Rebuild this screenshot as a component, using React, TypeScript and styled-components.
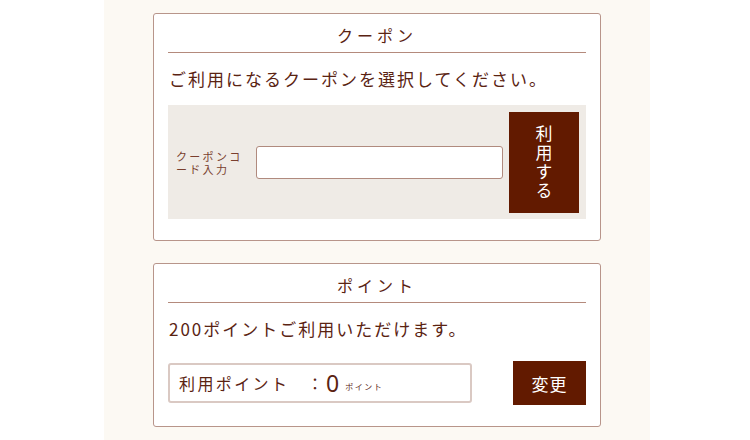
import styled, { createGlobalStyle } from 'styled-components';

const GlobalStyle = createGlobalStyle`
  html, body {
    margin: 0;
    padding: 0;
    background: #ffffff;
  }
  body {
    font-family: 'Noto Sans CJK JP', 'Noto Sans', sans-serif;
    color: #5a2312;
  }
`;

const Page = styled.div`
  width: 750px;
  height: 440px;
  overflow: hidden;
  background: #ffffff;
`;

const Panel = styled.div`
  margin-left: 104px;
  width: 546px;
  height: 440px;
  box-sizing: border-box;
  padding: 13px 49px 0;
  background: #fcf9f3;
  display: flex;
  flex-direction: column;
  gap: 22px;
`;

const Card = styled.section`
  width: 448px;
  box-sizing: border-box;
  background: #ffffff;
  border: 1px solid #b8958a;
  border-radius: 3px;
  padding: 0 14px 21px;
`;

const Title = styled.h2`
  margin: 0;
  height: 38px;
  line-height: 42px;
  text-align: center;
  font-size: 16px;
  font-weight: 400;
  letter-spacing: 4px;
  border-bottom: 1px solid #b48a7c;
`;

const Lead = styled.p<{ $after: number }>`
  margin: 13px 0 ${(p) => p.$after}px 1px;
  line-height: 26px;
  font-size: 17px;
  letter-spacing: 2px;
`;

const CodeBox = styled.div`
  height: 114px;
  box-sizing: border-box;
  background: #efebe6;
  padding: 7px 7px 6px 8px;
  display: flex;
  align-items: center;
`;

const CodeLabel = styled.label`
  width: 80px;
  box-sizing: border-box;
  padding-right: 12px;
  font-size: 11px;
  line-height: 13px;
  letter-spacing: 2.3px;
  color: #7a3f2e;
`;

const CodeInput = styled.input`
  width: 247px;
  height: 33px;
  box-sizing: border-box;
  border: 1px solid #b08a7e;
  border-radius: 3px;
  background: #ffffff;
  outline: none;
`;

const SubmitButton = styled.button`
  margin-left: auto;
  width: 70px;
  height: 101px;
  border: none;
  background: #621a00;
  color: #ffffff;
  font-family: inherit;
  font-size: 17px;
  writing-mode: vertical-rl;
  letter-spacing: 2px;
  display: flex;
  align-items: center;
  justify-content: center;
  padding: 0;
`;

const PointRow = styled.div`
  display: flex;
  align-items: center;
  justify-content: space-between;
`;

const PointField = styled.div`
  width: 304px;
  height: 40px;
  box-sizing: border-box;
  border: 2px solid #dac9c3;
  border-radius: 3px;
  display: flex;
  align-items: center;
  padding-left: 9px;
`;

const FieldLabel = styled.span`
  font-size: 16px;
  letter-spacing: 2.4px;
  width: 128px;
`;

const Value = styled.span`
  font-family: 'Noto Sans', sans-serif;
  font-size: 23px;
  margin: 0 6px 0 3px;
`;

const Unit = styled.span`
  font-size: 8px;
  letter-spacing: 1.5px;
  margin-top: 6px;
`;

const ChangeButton = styled.button`
  width: 73px;
  height: 44px;
  border: none;
  background: #621a00;
  color: #ffffff;
  font-family: inherit;
  font-size: 17px;
  letter-spacing: 1px;
  padding: 0;
`;

export default function App() {
  return (
    <Page>
      <GlobalStyle />
      <Panel>
        <Card>
          <Title>クーポン</Title>
          <Lead $after={13}>ご利用になるクーポンを選択してください。</Lead>
          <CodeBox>
            <CodeLabel>クーポンコード入力</CodeLabel>
            <CodeInput type="text" />
            <SubmitButton>利用する</SubmitButton>
          </CodeBox>
        </Card>
        <Card>
          <Title>ポイント</Title>
          <Lead $after={19}>200ポイントご利用いただけます。</Lead>
          <PointRow>
            <PointField>
              <FieldLabel>利用ポイント</FieldLabel>
              <span>：</span>
              <Value>0</Value>
              <Unit>ポイント</Unit>
            </PointField>
            <ChangeButton>変更</ChangeButton>
          </PointRow>
        </Card>
      </Panel>
    </Page>
  );
}
